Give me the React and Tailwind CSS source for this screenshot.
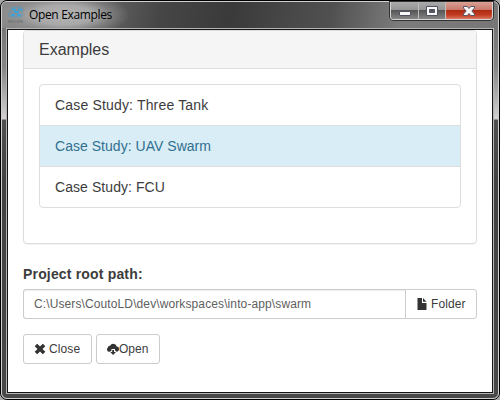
const examples = [
  { name: 'Case Study: Three Tank', style: 'h-[41px] border-b border-[#ddd] px-[15px] leading-[40px] tracking-[0.17px]' },
  { name: 'Case Study: UAV Swarm', style: 'h-[41px] border-b border-[#ddd] bg-[#d9edf7] px-[15px] leading-[40px] tracking-[0.03px] text-[#31708f]' },
  { name: 'Case Study: FCU', style: 'h-[40px] px-[15px] leading-[40px] tracking-[0.07px]' },
];

function AppLogo() {
  return (
    <svg width="16" height="17" viewBox="0 0 16 17" className="shrink-0" fill="none">
      <path d="M1 9.5C0 7 1.5 5.5 3.5 5.5C1.5 3 4 1 7 1.5C10 .5 14 .5 15 3C15.5 4.5 14 5.5 13.5 6.5C15.5 8 14.5 11 12 11H3C2 11 1.3 10.5 1 9.5Z" stroke="#579bbd" strokeWidth=".9" />
      <path d="M6 3.5L8.5 5.5L12 3.5M4.5 8.5L8.5 5.5L11 8.5" stroke="#4b93b7" strokeWidth=".7" />
      <rect x="4" y="2.5" width="4" height="2" rx="1" fill="#35a4df" />
      <rect x="10" y="2.5" width="4" height="2" rx="1" fill="#35a4df" />
      <rect x="6" y="5" width="5" height="2" rx="1" fill="#35a4df" />
      <rect x="3" y="8" width="4" height="2" rx="1" fill="#35a4df" />
      <rect x="9" y="8" width="4" height="2" rx="1" fill="#35a4df" />
      <text x="0" y="16.5" fontSize="4" textLength="15" fill="#666" fontFamily="Liberation Sans, sans-serif">INTO-CPS</text>
    </svg>
  );
}

function WindowControls() {
  return (
    <div className="mr-[5px] flex h-[18px] w-[103px] shrink-0 overflow-hidden rounded-b-[4px] border border-t-0 border-[#d5d5d5] shadow-[0_0_0_1px_#333]">
      <button className="flex w-[28px] shrink-0 items-center justify-center border-r border-[#bcbcbc] bg-[linear-gradient(#aaa_0%,#959595_46%,#555_50%,#858585_100%)]">
        <svg width="14" height="14" viewBox="0 0 14 14" className="shrink-0">
          <rect x="1.5" y="7.5" width="11" height="4" rx=".5" fill="#f8f8f8" stroke="#505260" />
        </svg>
      </button>
      <button className="flex w-[27px] shrink-0 items-center justify-center border-r border-[#bcbcbc] bg-[linear-gradient(#aaa_0%,#959595_46%,#555_50%,#858585_100%)]">
        <svg width="14" height="14" viewBox="0 0 14 14" className="shrink-0">
          <path fillRule="evenodd" d="M1.5 2.5H12.5V11.5H1.5ZM4.5 5.5V8.5H9.5V5.5Z" fill="#f8f8f8" stroke="#505260" />
        </svg>
      </button>
      <button className="flex flex-1 items-center justify-center bg-[linear-gradient(#d9a095_0%,#c9796b_46%,#ad2b13_50%,#c23b20_75%,#d8755d_100%)] shadow-[inset_0_0_1px_#eeb4a6]">
        <svg width="14" height="14" viewBox="0 0 14 14" className="shrink-0">
          <path d="M1.5 2.5H5.2L7 4.5L8.8 2.5H12.5V4L9.8 7L12.5 10V11.5H8.8L7 9.5L5.2 11.5H1.5V10L4.2 7L1.5 4Z" fill="#f8f8f8" stroke="#555666" />
        </svg>
      </button>
    </div>
  );
}

function RemoveIcon() {
  return (
    <svg width="12" height="12" viewBox="0 0 12 12" className="shrink-0">
      <path d="M.7 3.2L3.2 .7L6 3.5L8.8 .7L11.3 3.2L8.5 6L11.3 8.8L8.8 11.3L6 8.5L3.2 11.3L.7 8.8L3.5 6Z" fill="#333" />
    </svg>
  );
}

function CloudDownloadIcon() {
  return (
    <svg width="12" height="12" viewBox="0 0 12 12" className="shrink-0">
      <path d="M2.4 8.8A2.3 2.3 0 0 1 1 4.6C1 3.2 2.2 2.4 3.2 2.8C4 0 9 0 9.6 3.5C11.2 3.4 12 4.6 12 6.1C12 7.8 11 8.8 9.6 8.8L8 7.4V6H4.5V7.4L3 8.8Z" fill="#333" />
      <path d="M5.2 7H7V9H9L6.1 12L3.2 9H5.2Z" fill="#333" />
    </svg>
  );
}

function FileIcon() {
  return (
    <svg width="10" height="12" viewBox="0 0 10 12" className="shrink-0">
      <path d="M.5 0H5V5H9.5V12H.5ZM6 0L9.5 3.8H6Z" fill="#333" />
    </svg>
  );
}

export default function App() {
  return (
    <div className="h-[400px] w-[500px] overflow-hidden bg-[#a8a8a8] font-['Liberation_Sans',Arial,sans-serif] text-[#3c3c3c]">
      <div className="h-full overflow-hidden rounded-[7px] border border-black">
        <div className="flex h-full flex-col rounded-[6px] border border-[#d0d0d0] bg-[linear-gradient(#777_0px,#777_28px,#858585_65px,#d2d0d0_117px,#505050_118px,#424242_180px,#484848_398px)]">
          <header className="flex h-[26px] shrink-0 items-start rounded-t-[5px] bg-[radial-gradient(ellipse_66px_22px_at_62px_13px,#b4b4b4_0%,#b0b0b0e0_45%,#a0a0a070_72%,#99999900_100%),linear-gradient(100deg,#8b8b8b_0%,#707070_15%,#464646_32%,#3a3a3a_46%,#484848_58%,#505050_66%,#7c7c7c_80%,#777_100%)]">
            <div className="ml-[6px] mt-[4px] flex"><AppLogo /></div>
            <h1 className="ml-[5px] mt-[4px] whitespace-nowrap font-['Open_Sans',sans-serif] text-[12px] leading-[18px] tracking-[-0.35px] text-black">Open Examples</h1>
            <div className="flex-1" />
            <WindowControls />
          </header>
          <div className="mx-[4px] mb-[4px] flex min-h-0 flex-1 border border-[#b5b5b5]">
            <main className="min-w-0 flex-1 overflow-hidden border border-[#151515] bg-white px-[15px]">
              <section className="h-[214px] rounded-[4px] border border-[#ddd] shadow-[0_1px_1px_rgba(0,0,0,0.05)]">
                <h2 className="h-[38px] rounded-t-[3px] border-b border-[#ddd] bg-[#f5f5f5] px-[15px] text-[16px] leading-[37px]">Examples</h2>
                <ul className="mx-[15px] mt-[15px] h-[124px] overflow-hidden rounded-[4px] border border-[#ddd] text-[14px]">
                  {examples.map(({ name, style }) => (
                    <li key={name} className={style}>{name}</li>
                  ))}
                </ul>
              </section>
              <label htmlFor="root" className="mt-[20px] block text-[14px] font-bold leading-[20px] tracking-[0.17px]">Project root path:</label>
              <div className="mt-[5px] flex h-[30px]">
                <input id="root" readOnly value="C:\Users\CoutoLD\dev\workspaces\into-app\swarm" className="min-w-0 flex-1 rounded-l-[3px] border border-r-0 border-[#ccc] bg-white px-[10px] text-[12px] tracking-[0.11px] text-[#606060] shadow-[inset_0_1px_1px_rgba(0,0,0,0.075)] outline-none" />
                <button className="flex w-[72px] items-center gap-[4px] rounded-r-[3px] border border-[#ccc] pl-[11px] text-[12px] tracking-[0.12px]"><FileIcon />Folder</button>
              </div>
              <div className="mt-[15px] flex gap-[4px] text-[12px]">
                <button className="flex h-[30px] w-[69px] items-center gap-[3px] rounded-[3px] border border-[#ccc] pl-[10px] tracking-[0.1px]"><RemoveIcon />Close</button>
                <button className="flex h-[30px] w-[64px] items-center rounded-[3px] border border-[#ccc] pl-[10px]"><CloudDownloadIcon />Open</button>
              </div>
            </main>
          </div>
        </div>
      </div>
    </div>
  );
}
